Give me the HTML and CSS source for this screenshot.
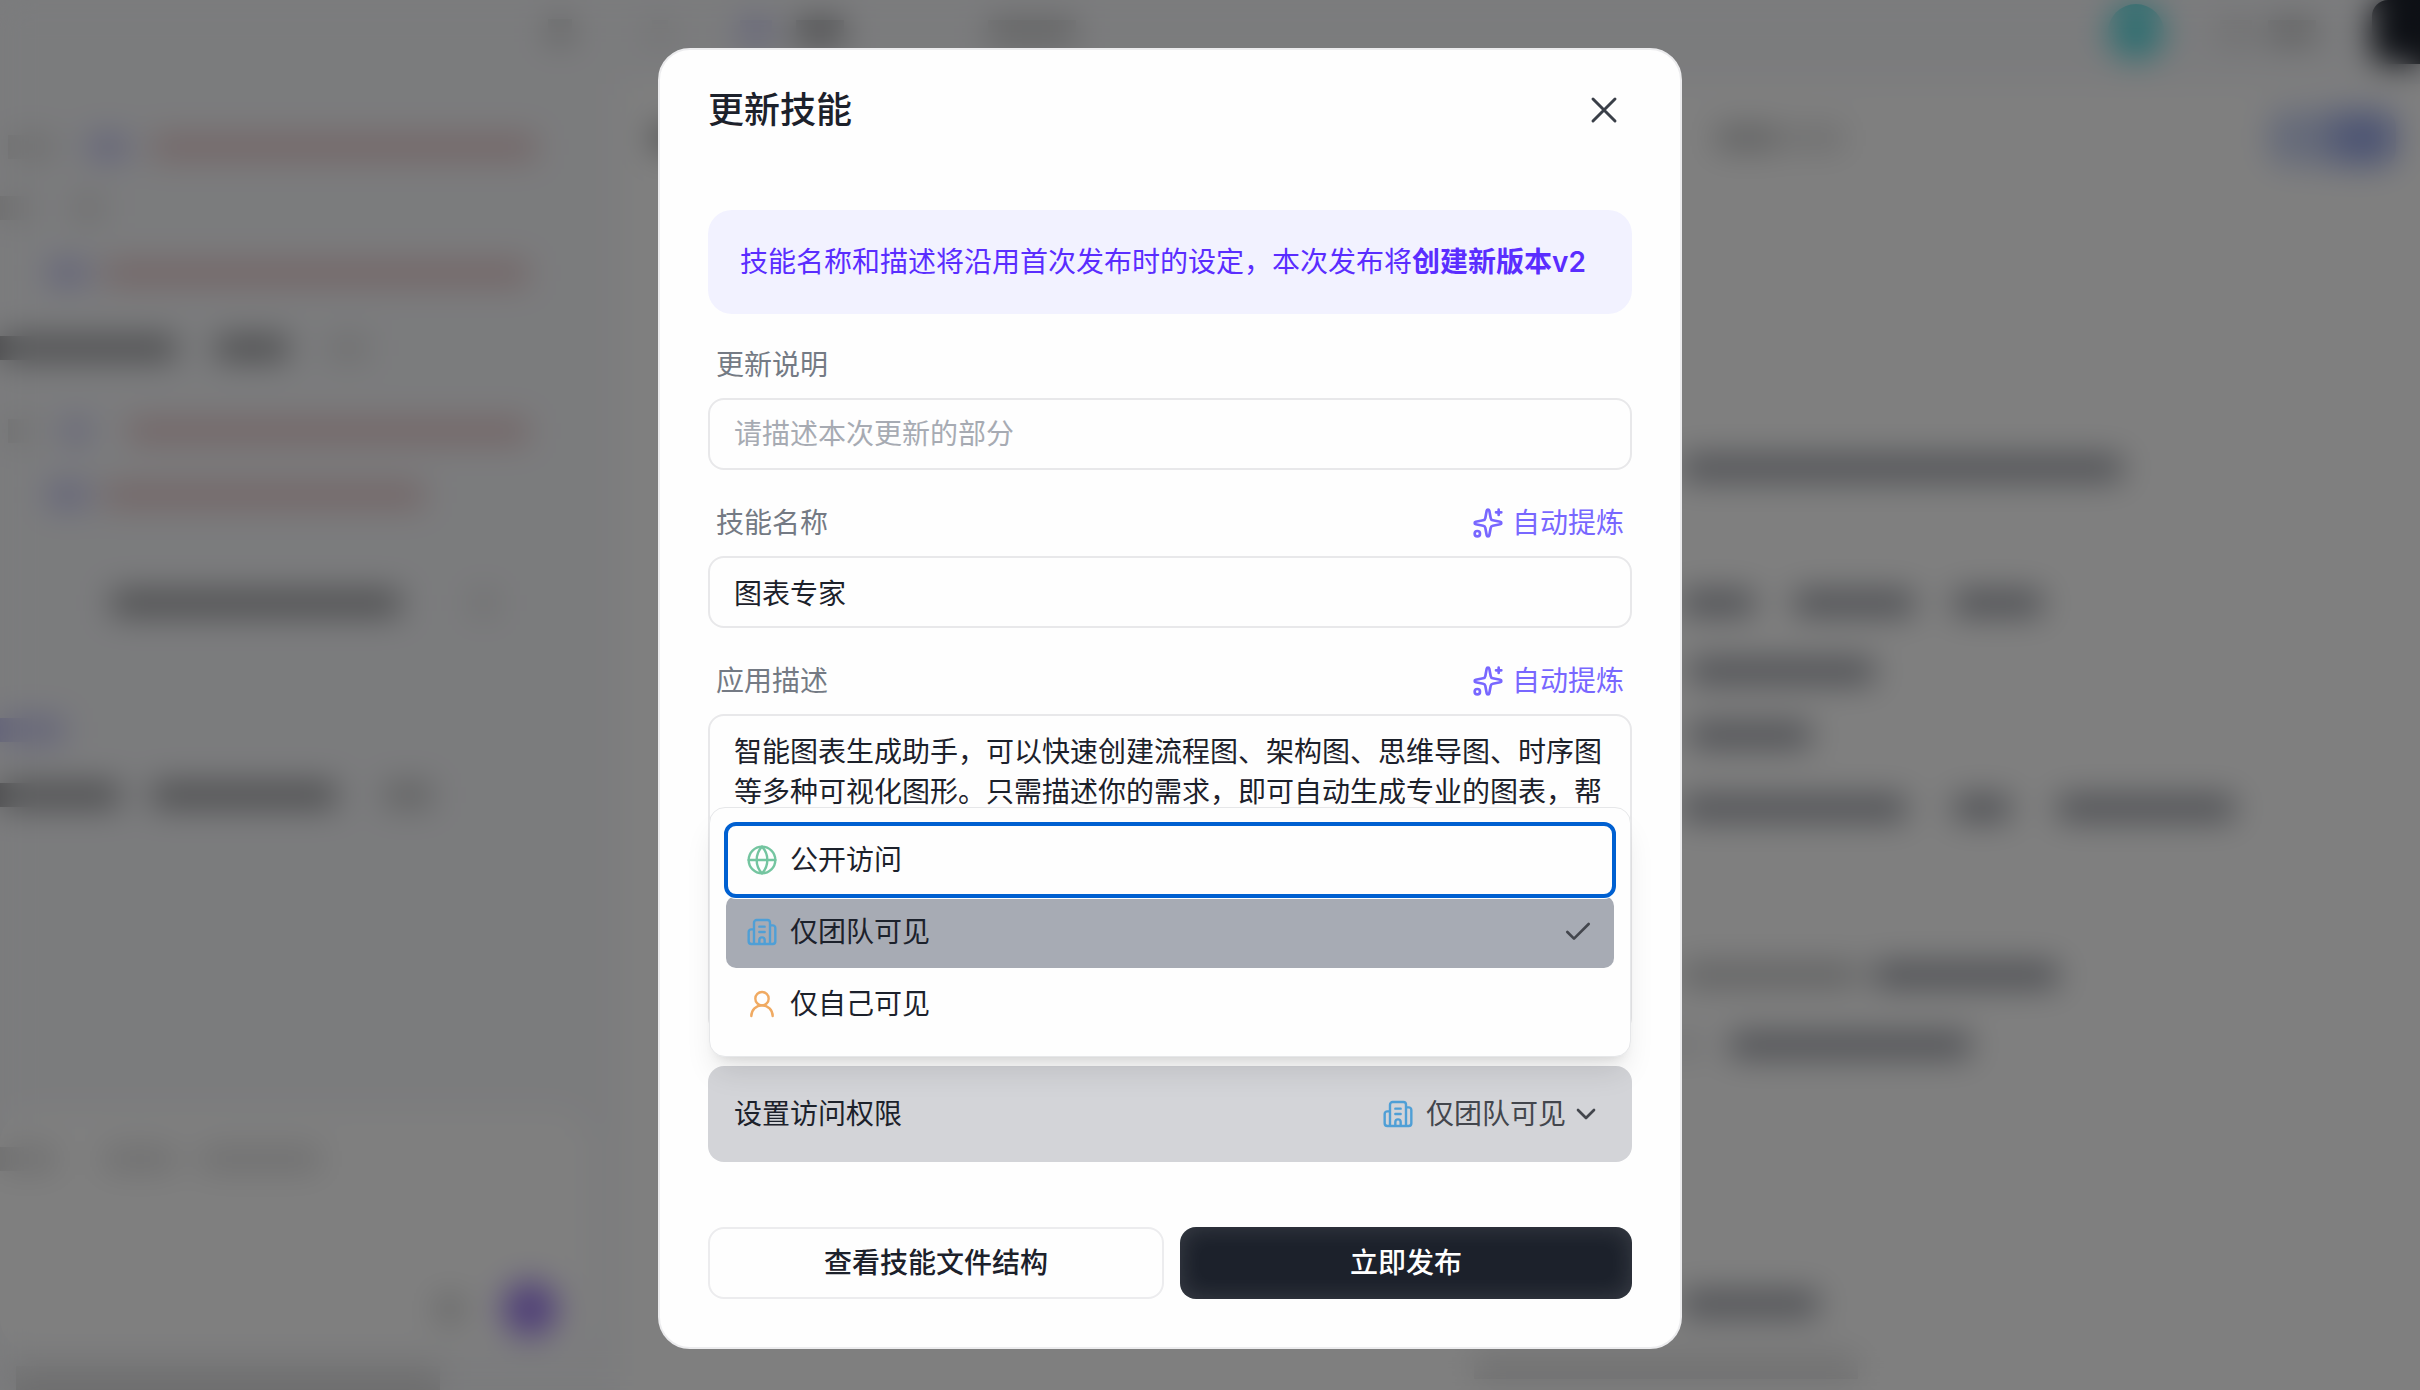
FILE: index.html
```html
<!DOCTYPE html>
<html lang="zh-CN">
<head>
<meta charset="utf-8">
<meta name="viewport" content="width=device-width, initial-scale=1">
<title>更新技能</title>
<link rel="stylesheet" href="styles.css">
</head>
<body>
<svg class="sprite" aria-hidden="true">
  <symbol id="i-x" viewBox="0 0 24 24"><path d="M18 6 6 18M6 6l12 12"/></symbol>
  <symbol id="i-sparkles" viewBox="0 0 24 24"><path d="M11.017 2.814a1 1 0 0 1 1.966 0l1.051 5.558a2 2 0 0 0 1.594 1.594l5.558 1.051a1 1 0 0 1 0 1.966l-5.558 1.051a2 2 0 0 0-1.594 1.594l-1.051 5.558a1 1 0 0 1-1.966 0l-1.051-5.558a2 2 0 0 0-1.594-1.594l-5.558-1.051a1 1 0 0 1 0-1.966l5.558-1.051a2 2 0 0 0 1.594-1.594z"/><path d="M20 2v4M22 4h-4"/><circle cx="4" cy="20" r="2"/></symbol>
  <symbol id="i-globe" viewBox="0 0 24 24"><circle cx="12" cy="12" r="10"/><path d="M12 2a14.5 14.5 0 0 0 0 20 14.5 14.5 0 0 0 0-20M2 12h20"/></symbol>
  <symbol id="i-building" viewBox="0 0 24 24"><path d="M10 12h4M10 8h4M14 21v-3a2 2 0 0 0-4 0v3M6 10H4a2 2 0 0 0-2 2v7a2 2 0 0 0 2 2h16a2 2 0 0 0 2-2V9a2 2 0 0 0-2-2h-2M6 21V5a2 2 0 0 1 2-2h8a2 2 0 0 1 2 2v16"/></symbol>
  <symbol id="i-user" viewBox="0 0 24 24"><circle cx="12" cy="8" r="5"/><path d="M20 21a8 8 0 0 0-16 0"/></symbol>
  <symbol id="i-check" viewBox="0 0 24 24"><path d="M20 6 9 17l-5-5"/></symbol>
  <symbol id="i-chevron" viewBox="0 0 24 24"><path d="m6 9 6 6 6-6"/></symbol>
</svg>

<div class="workspace" aria-hidden="true">
  <div class="chat">
    <div class="row end"><i class="bar mid w24"></i><i class="w48"></i></div>
    <div class="row"><i class="w8"></i><i class="bar faint w48"></i><i class="w32"></i><i class="bar blue w40"></i><i class="w24"></i><i class="bar red w384"></i></div>
    <div class="row"><i class="bar faint w32"></i><i class="w40"></i><i class="bar faint w32"></i></div>
    <div class="row"><i class="w48"></i><i class="bar blue w40"></i><i class="w16"></i><i class="bar red w424"></i></div>
    <div class="row"><i class="bar dark w176"></i><i class="w40"></i><i class="bar dark w72"></i><i class="w40"></i><i class="bar faint w40"></i></div>
    <div class="row"><i class="w8"></i><i class="bar faint w24"></i><i class="w32"></i><i class="bar blue w24"></i><i class="w40"></i><i class="bar red w400"></i></div>
    <div class="row"><i class="w48"></i><i class="bar blue w40"></i><i class="w16"></i><i class="bar red w320"></i></div>
    <div class="row"><i class="w40"></i><i class="w72"></i><i class="bar dark w288"></i><i class="w72"></i><i class="bar faint w24"></i></div>
    <div class="row"><i class="bar blue w64"></i></div>
    <div class="row"><i class="bar dark w120"></i><i class="w32"></i><i class="bar dark w184"></i><i class="w48"></i><i class="bar mid w48"></i></div>
    <div class="composer">
      <div class="row"><i class="bar faint w56"></i><i class="w48"></i><i class="bar faint w72"></i><i class="w24"></i><i class="bar faint w120"></i></div>
      <div class="row end tools"><i class="bar mid w24"></i><i class="w40"></i><i class="send"></i></div>
    </div>
    <div class="row"><i class="w16"></i><i class="bar faint w424"></i></div>
  </div>
  <div class="main">
    <div class="topbar">
      <i class="w32"></i><i class="bar faint w16"></i><i class="w72"></i><i class="bar blue w32"></i><i class="w24"></i><i class="bar dark w48"></i><i class="w144"></i><i class="bar mid w88"></i>
      <i class="push avatar"></i><i class="w56"></i><i class="bar faint w32"></i><i class="w16"></i><i class="bar mid w48"></i><i class="w56"></i><i class="publish"></i>
    </div>
    <div class="docbar"><i class="w32"></i><i class="bar dark w40"></i><i class="w1024"></i><i class="bar mid w64"></i><i class="w8"></i><i class="bar faint w56"></i><i class="push pill"></i></div>
    <div class="doc">
      <div class="row"><i class="bar ink w440"></i></div>
      <div class="row"><i class="bar ink w72"></i><i class="w40"></i><i class="bar ink w120"></i><i class="w40"></i><i class="bar ink w88"></i></div>
      <div class="row"><i class="w8"></i><i class="bar ink w184"></i></div>
      <div class="row"><i class="w8"></i><i class="bar ink w120"></i></div>
      <div class="row"><i class="bar ink w224"></i><i class="w48"></i><i class="bar ink w56"></i><i class="w48"></i><i class="bar ink w176"></i></div>
      <div class="row"><i class="bar mid w176"></i><i class="w16"></i><i class="bar ink w184"></i></div>
      <div class="row"><i class="bar ink w8"></i><i class="w40"></i><i class="bar ink w240"></i></div>
      <div class="row"><i class="bar ink w136"></i></div>
      <div class="row outdent"><i class="bar faint w384"></i></div>
    </div>
  </div>
</div>

<div class="overlay">
  <form class="modal" role="dialog" aria-modal="true" aria-labelledby="dialog-title">
    <header class="modal-head">
      <h1 id="dialog-title">更新技能</h1>
      <button type="button" class="plain close" aria-label="关闭"><svg class="icon icon-lg"><use href="#i-x"/></svg></button>
    </header>

    <p class="notice">技能名称和描述将沿用首次发布时的设定，本次发布将<strong>创建新版本v2</strong></p>

    <div class="field">
      <div class="field-head"><label for="note">更新说明</label></div>
      <input id="note" type="text" placeholder="请描述本次更新的部分">
    </div>
    <div class="field">
      <div class="field-head">
        <label for="name">技能名称</label>
        <button type="button" class="plain refine"><svg class="icon"><use href="#i-sparkles"/></svg>自动提炼</button>
      </div>
      <input id="name" type="text" value="图表专家">
    </div>
    <div class="field">
      <div class="field-head">
        <label for="desc">应用描述</label>
        <button type="button" class="plain refine"><svg class="icon"><use href="#i-sparkles"/></svg>自动提炼</button>
      </div>
      <textarea id="desc">智能图表生成助手，可以快速创建流程图、架构图、思维导图、时序图等多种可视化图形。只需描述你的需求，即可自动生成专业的图表，帮</textarea>
    </div>

    <div class="access">
      <span id="access-label">设置访问权限</span>
      <button type="button" class="plain trigger" aria-haspopup="listbox" aria-expanded="true" aria-labelledby="access-label access-value">
        <svg class="icon team"><use href="#i-building"/></svg><span id="access-value">仅团队可见</span><svg class="icon chevron"><use href="#i-chevron"/></svg>
      </button>
      <div class="menu" role="listbox" aria-labelledby="access-label">
        <button type="button" class="plain option is-focused" role="option" aria-selected="false"><svg class="icon public"><use href="#i-globe"/></svg>公开访问</button>
        <button type="button" class="plain option is-selected" role="option" aria-selected="true"><svg class="icon team"><use href="#i-building"/></svg>仅团队可见<svg class="icon check"><use href="#i-check"/></svg></button>
        <button type="button" class="plain option" role="option" aria-selected="false"><svg class="icon self"><use href="#i-user"/></svg>仅自己可见</button>
      </div>
    </div>

    <footer class="actions">
      <button type="button" class="btn btn-outline">查看技能文件结构</button>
      <button type="submit" class="btn btn-dark">立即发布</button>
    </footer>
  </form>
</div>
</body>
</html>
```
FILE: styles.css
```css
* { box-sizing: border-box; }

body {
  margin: 0;
  min-height: 100vh;
  background: #fff;
  color: #1c212b;
  font: 28px/40px Inter, "Noto Sans CJK SC", sans-serif;
}

button, input, textarea { font: inherit; color: inherit; }

.sprite { display: none; }

.icon {
  flex: none;
  width: 32px;
  height: 32px;
  fill: none;
  stroke: currentColor;
  stroke-width: 1.8;
  stroke-linecap: round;
  stroke-linejoin: round;
}
.icon-lg { width: 44px; height: 44px; stroke-width: 1.6; }

/* Workspace behind the dialog */
.workspace {
  display: grid;
  grid-template-columns: 620px 1fr;
  height: 100vh;
  overflow: hidden;
}
.chat {
  display: grid;
  grid-template-rows: 43px 116px 61px 65px 75px 83px 64px 108px 127px 65px 1fr 40px;
  background: #f7f8fb;
}
.row { display: flex; align-items: flex-end; min-width: 0; }
.row.end { justify-content: flex-end; }
.bar { flex: none; height: 24px; }
.bar.dark { background: #96979a; }
.bar.ink { background: #979aa2; }
.bar.mid { background: #c2c3c4; }
.bar.faint { background: #dededf; }
.bar.red { background: #e6c9cb; }
.bar.blue { background: #c4c4f2; }

.composer {
  display: grid;
  grid-template-rows: 60px 1fr;
  margin: 304px 32px 0 0;
  background: #fff;
  border-radius: 32px;
}
.row.tools { align-items: center; padding: 96px 30px 0 0; }
.send { width: 56px; height: 56px; border-radius: 50%; background: #9f7ef0; }

.main { display: grid; grid-template-rows: 84px 108px 1fr; background: #fff; min-width: 0; }
.topbar, .docbar { display: flex; align-items: center; }
.topbar { padding-bottom: 20px; background: #f7f8fb; }
.push { margin-left: auto; }
.avatar { flex: none; width: 56px; height: 56px; border-radius: 50%; background: #5edde2; }
.publish { flex: none; width: 48px; height: 64px; border-radius: 16px 0 0 16px; background: #1c212b; }
.pill {
  flex: none;
  width: 128px;
  height: 56px;
  margin-right: 24px;
  border-radius: 16px;
  background: linear-gradient(90deg, #ccd6f4 40%, #9dace8 60%);
}
.doc {
  display: grid;
  grid-template-rows: 288px 135px 68px 64px 73px 167px 70px 259px 63px;
  padding-left: 1062px;
}
.outdent { margin-left: -208px; }

.w8 { width: 8px; } .w16 { width: 16px; } .w24 { width: 24px; } .w32 { width: 32px; }
.w40 { width: 40px; } .w48 { width: 48px; } .w56 { width: 56px; } .w64 { width: 64px; }
.w72 { width: 72px; } .w88 { width: 88px; } .w120 { width: 120px; } .w136 { width: 136px; }
.w144 { width: 144px; } .w176 { width: 176px; } .w184 { width: 184px; }
.w224 { width: 224px; } .w240 { width: 240px; } .w288 { width: 288px; } .w320 { width: 320px; }
.w384 { width: 384px; } .w400 { width: 400px; } .w424 { width: 424px; } .w440 { width: 440px; }
.w1024 { width: 1024px; }

/* Dialog */
.overlay {
  position: fixed;
  inset: 0;
  display: flex;
  justify-content: center;
  align-items: flex-start;
  padding: 48px 80px 40px 0;
  overflow: auto;
  background: rgba(0, 0, 0, .5);
  backdrop-filter: blur(16px);
}
.modal {
  width: 100%;
  max-width: 1024px;
  padding: 0 48px 48px;
  background: #fefefe;
  border: 2px solid #ececee;
  border-radius: 32px;
}
.plain { display: flex; align-items: center; padding: 0; border: 0; background: none; }

.modal-head {
  display: flex;
  align-items: center;
  justify-content: space-between;
  height: 120px;
  margin-bottom: 40px;
}
.modal-head h1 { margin: 0; font-size: 36px; line-height: 48px; font-weight: 500; }
.close { margin-right: 6px; color: #3a3f48; }

.notice {
  margin: 0 0 30px;
  padding: 32px;
  border-radius: 24px;
  background: #f2f2ff;
  color: #5a2dff;
}
.notice strong { font-weight: 600; }

.field { display: flex; flex-direction: column; gap: 12px; margin-bottom: 32px; }
.field-head {
  display: flex;
  justify-content: space-between;
  align-items: center;
  height: 42px;
  padding: 0 8px;
  color: #747a84;
}
.refine { gap: 8px; color: #7867ff; }
.refine .icon { stroke-width: 2; }

.field input, .field textarea {
  width: 100%;
  padding: 14px 24px;
  border: 2px solid #e8e8ea;
  border-radius: 16px;
  background: transparent;
  outline: none;
}
.field input { height: 72px; }
.field input::placeholder { color: #a7abb3; opacity: 1; }
.field textarea { display: block; height: 320px; padding: 16px 24px; resize: none; overflow: hidden; }

.access {
  position: relative;
  display: flex;
  align-items: center;
  justify-content: space-between;
  height: 96px;
  padding: 0 30px 0 26px;
  border-radius: 16px;
  background: #d3d4d8;
}
.trigger { color: #43464d; }
.trigger .team { margin-right: 12px; }
.trigger .chevron { margin-left: 4px; stroke-width: 2; }

.menu {
  position: absolute;
  left: 1px;
  right: 1px;
  bottom: calc(100% + 9px);
  padding: 16px;
  border: 1px solid #e6e7e9;
  border-radius: 16px;
  background: #fefefe;
  box-shadow: 0 20px 30px -6px rgba(0, 0, 0, .1), 0 8px 12px -8px rgba(0, 0, 0, .12);
}
.option {
  width: 100%;
  height: 72px;
  padding: 0 20px;
  gap: 12px;
  border-radius: 10px;
}
.option .check { margin-left: auto; color: #43464d; stroke-width: 2; }
.is-focused {
  position: relative;
  z-index: 1;
  outline: 4px solid #0060d1;
  outline-offset: -2px;
  box-shadow: 0 0 0 3px #fefefe;
}
.is-selected { background: #a7abb4; }
.public { color: #74c5a0; }
.team { color: #4f9fd6; }
.self { color: #f0aa62; }

.actions { display: grid; grid-template-columns: 114fr 113fr; gap: 16px; margin-top: 65px; }
.btn { height: 72px; padding: 0; border-radius: 16px; font-weight: 500; }
.btn-outline { border: 2px solid #ececee; background: #fefefe; }
.btn-dark {
  border: 0;
  background: #1c212b;
  color: #fff;
  box-shadow: inset 0 0 24px rgba(255, 255, 255, .14);
}
```
